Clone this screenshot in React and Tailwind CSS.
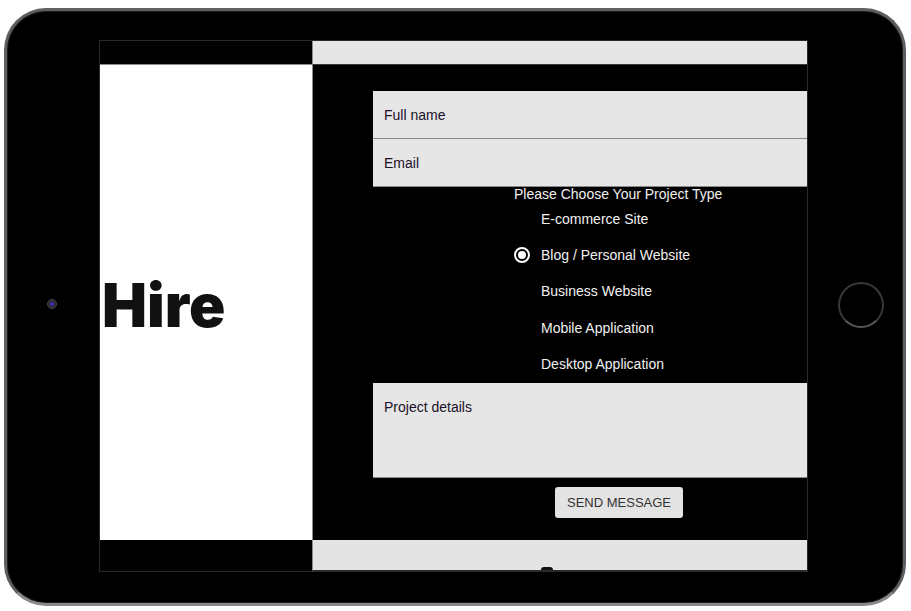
import { useState } from "react";

const projectTypes = [
  "E-commerce Site",
  "Blog / Personal Website",
  "Business Website",
  "Mobile Application",
  "Desktop Application",
];

export default function App() {
  const [type, setType] = useState("Blog / Personal Website");

  return (
    <div className="w-[911px] h-[611px] bg-white overflow-hidden font-['Liberation_Sans',Arial,sans-serif]">
      {/* tablet frame */}
      <div className="ml-[4px] mt-[8px] w-[902px] h-[598px] rounded-[42px] border-[3px] border-[#5f5f63] border-b-[#8a8a8e] bg-black flex shadow-[inset_0_0_0_1px_#1c1c1c]">
        {/* left bezel with camera */}
        <div className="w-[92px] flex items-center justify-center">
          <div className="w-[10px] h-[10px] rounded-full bg-[#2a2a30] border border-[#45454c] flex items-center justify-center ml-[-2px] mt-[-6px]">
            <div className="w-[4px] h-[4px] rounded-full bg-[#3a30b8]" />
          </div>
        </div>

        {/* screen */}
        <div className="mt-[29px] w-[709px] h-[532px] border border-[#2a2a2a] flex flex-col">
          {/* header */}
          <div className="flex h-[24px] shrink-0">
            <div className="w-[212px] bg-black border-b border-[#8c8c8c]" />
            <div className="flex-1 bg-[#e6e6e6] border-l border-[#8c8c8c] border-b border-b-[#3a3a3a]" />
          </div>

          {/* main */}
          <div className="flex flex-1 min-h-0">
            <div className="w-[212px] bg-white flex items-center overflow-hidden">
              <h1 className="ml-[2px] mt-[4px] text-[60px] leading-none font-black tracking-[0px] text-[#111] font-['Inter',sans-serif]">
                Hire
              </h1>
            </div>
            <div className="flex-1 bg-black border-l border-[#8c8c8c] pt-[26px] pl-[60px]">
              <input
                placeholder="Full name"
                className="block w-full h-[48px] bg-[#e6e6e6] border-b border-[#8a8a8a] px-[11px] text-[14px] text-[#1a1028] placeholder:text-[#1a1028] outline-none"
              />
              <input
                placeholder="Email"
                className="block w-full h-[48px] bg-[#e6e6e6] border-b border-[#8a8a8a] px-[11px] text-[14px] text-[#1a1028] placeholder:text-[#1a1028] outline-none"
              />
              <div className="pl-[141px] text-[14px] text-[#f0f0f0]">
                <p className="leading-[16px] mt-[-1px]">Please Choose Your Project Type</p>
                <div className="flex flex-col mt-[-1px]">
                  {projectTypes.map((t) => (
                    <label key={t} className="flex items-center h-[36.3px] cursor-pointer">
                      <span
                        className={
                          t === type
                            ? "w-[16px] h-[16px] rounded-full border-2 border-white flex items-center justify-center"
                            : "w-[16px] h-[16px] rounded-full opacity-0"
                        }
                      >
                        {t === type && <span className="w-[8px] h-[8px] rounded-full bg-white" />}
                      </span>
                      <input
                        type="radio"
                        name="type"
                        checked={t === type}
                        onChange={() => setType(t)}
                        className="hidden"
                      />
                      <span className="ml-[11px]">{t}</span>
                    </label>
                  ))}
                </div>
              </div>
              <textarea
                placeholder="Project details"
                className="block w-full h-[95px] mt-[1px] resize-none bg-[#e6e6e6] border-b border-[#8a8a8a] px-[11px] pt-[14px] text-[14px] text-[#1a1028] placeholder:text-[#1a1028] outline-none"
              />
              <div className="flex justify-center pl-[58px] mt-[9px]">
                <button className="w-[128px] h-[31px] rounded-[3px] bg-[#e3e3e3] text-[13px] text-[#333]">
                  SEND MESSAGE
                </button>
              </div>
            </div>
          </div>

          {/* footer */}
          <div className="flex h-[31px] shrink-0">
            <div className="w-[212px] bg-black" />
            <div className="relative flex-1 bg-[#e4e4e4] border-l border-[#8c8c8c] border-b border-b-[#2a2a2a]">
              <span className="absolute left-[228px] bottom-0 w-[12px] h-[3px] rounded-t-full bg-[#111]" />
            </div>
          </div>
        </div>

        {/* right bezel with home button */}
        <div className="flex-1 flex items-center justify-center">
          <div className="w-[46px] h-[46px] rounded-full border-2 border-[#38383c] border-b-[#55555b] ml-[10px] mt-[-5px]" />
        </div>
      </div>
    </div>
  );
}
